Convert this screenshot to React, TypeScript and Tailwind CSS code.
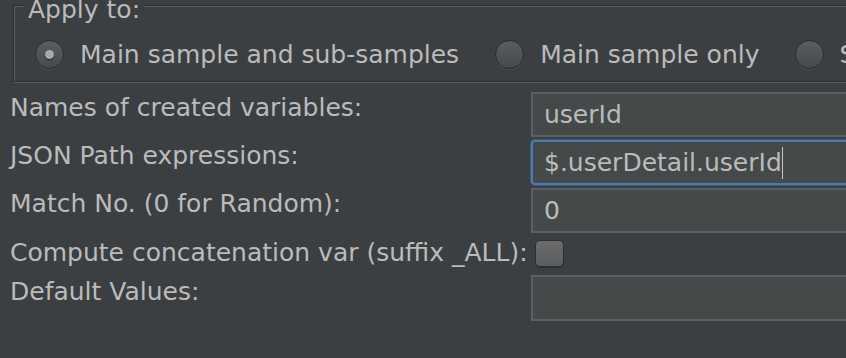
import React from "react";

const labelCls = "w-[531px] shrink-0 pl-[10px] whitespace-nowrap leading-[28px]";

function Radio({ checked }: { checked?: boolean }) {
  return (
    <span className="w-[29px] h-[29px] shrink-0 rounded-full border-[1.5px] border-[#2a2c2d] bg-gradient-to-b from-[#5a5e60] to-[#474a4c] shadow-[0_1px_0_#4a4e50] flex items-center justify-center">
      {checked && <span className="w-[9px] h-[9px] rounded-full bg-[#a9a9a9] shadow-[0_1px_1px_#1e1f20]" />}
    </span>
  );
}

function Field({ value, focused, h = "h-[45px]" }: { value?: string; focused?: boolean; h?: string }) {
  return (
    <div
      className={`w-[400px] shrink-0 ${h} bg-[#45494a] flex items-center pl-[11px] ${
        focused
          ? "border-[2px] border-[#4d79ad] rounded-[4px] shadow-[0_0_0_1px_#3b5a7e]"
          : "border-[2px] border-[#5d6061]"
      }`}
    >
      <span className="whitespace-nowrap leading-[28px]">{value}</span>
      {focused && <span className="w-[1px] h-[32px] bg-[#c8c8c8]" />}
    </div>
  );
}

export default function App() {
  return (
    <div
      className="w-[846px] h-[358px] overflow-hidden bg-[#3c3f41] text-[#bbbbbb] text-[25px]"
      style={{ fontFamily: '"DejaVu Sans", "Noto Sans", sans-serif' }}
    >
      {/* Apply to: titled etched box */}
      <div className="relative ml-[13px] mt-[5px] w-[900px] h-[77px] border border-[#2b2d2e] shadow-[inset_1px_1px_0_#5a6062,1px_1px_0_#5a6062]">
        <span className="absolute left-[10px] top-[-10px] px-[4px] bg-[#3c3f41] leading-[28px] whitespace-nowrap">
          Apply to:
        </span>
        <div className="flex items-center pt-[34px] pl-[21px] whitespace-nowrap leading-[28px]">
          <div className="flex items-center gap-[16px]">
            <Radio checked />
            <span>Main sample and sub-samples</span>
          </div>
          <div className="flex items-center gap-[16px] ml-[36px]">
            <Radio />
            <span>Main sample only</span>
          </div>
          <div className="flex items-center gap-[16px] ml-[35px]">
            <Radio />
            <span>Sub-samples only</span>
          </div>
        </div>
      </div>

      <div className="mt-[10px] flex flex-col gap-[3px]">
        <div className="flex items-start">
          <div className={`${labelCls} pt-[2px]`}>Names of created variables:</div>
          <Field value="userId" />
        </div>
        <div className="flex items-start">
          <div className={`${labelCls} pt-[2px]`}>JSON Path expressions:</div>
          <Field value="$.userDetail.userId" focused />
        </div>
        <div className="flex items-start">
          <div className={`${labelCls} pt-[2px]`}>Match No. (0 for Random):</div>
          <Field value="0" />
        </div>
        <div className="flex items-start h-[36px]">
          <div className={`${labelCls} pt-[3px]`}>Compute concatenation var (suffix _ALL):</div>
          <span className="mt-[4px] ml-[4px] w-[29px] h-[27px] shrink-0 rounded-[5px] border border-[#2c2e2f] bg-gradient-to-b from-[#6b6c6d] to-[#5b5c5d] shadow-[0_1px_0_#2f3132]" />
        </div>
        <div className="flex items-start">
          <div className={`${labelCls} pt-[3px]`}>Default Values:</div>
          <Field h="h-[46px]" />
        </div>
      </div>
    </div>
  );
}
